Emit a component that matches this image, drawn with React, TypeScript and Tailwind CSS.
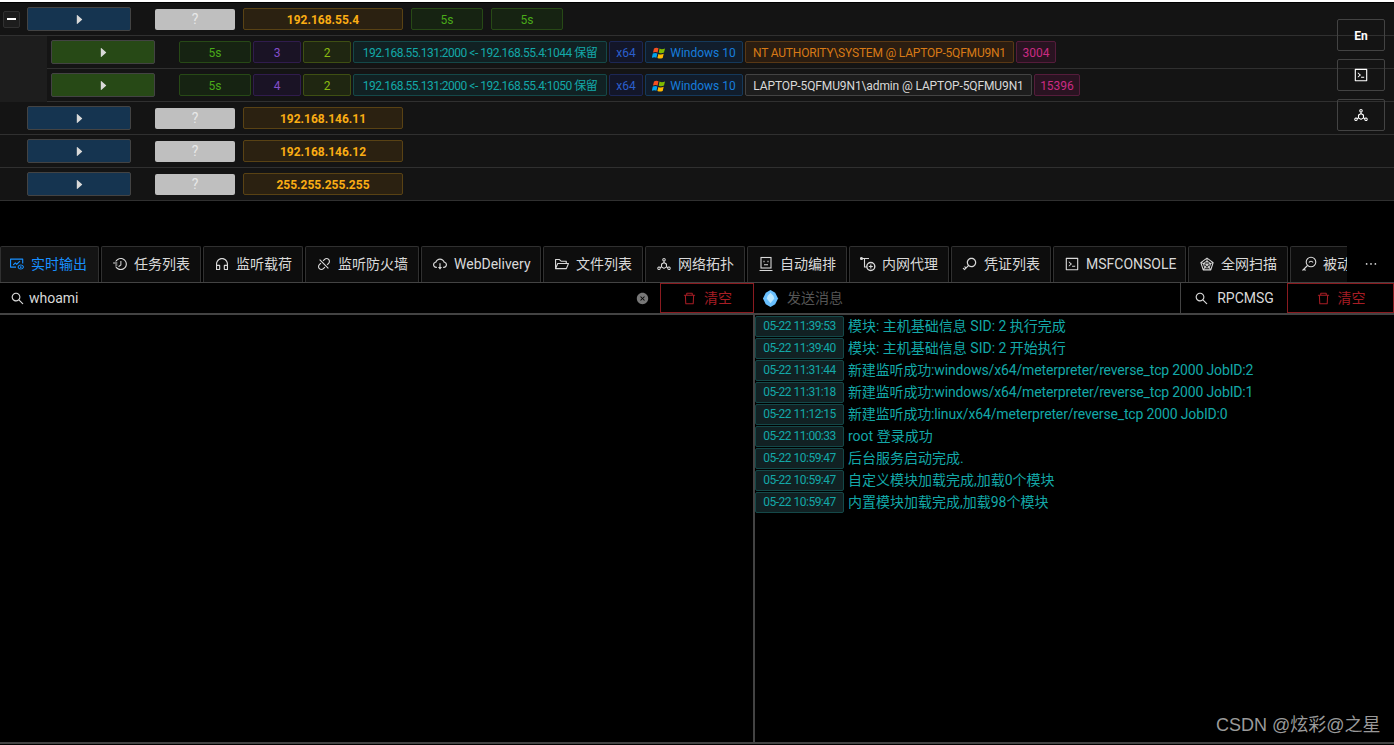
import type { ReactNode } from "react";
import {
  AiFillCaretRight,
  AiFillCloseCircle,
  AiOutlineCloudDownload,
  AiOutlineCode,
  AiOutlineCustomerService,
  AiOutlineDelete,
  AiOutlineDeploymentUnit,
  AiOutlineDisconnect,
  AiOutlineEllipsis,
  AiOutlineFieldTime,
  AiOutlineFolderOpen,
  AiOutlineFundView,
  AiOutlineKey,
  AiOutlineRadarChart,
  AiOutlineSearch,
} from "react-icons/ai";

const font = "font-['Roboto','Noto_Sans_CJK_SC',sans-serif]";

function Tag({ className, children }: { className: string; children: ReactNode }) {
  return (
    <span className={`flex h-[22px] items-center justify-center whitespace-nowrap rounded-[2px] border pt-px text-xs ${className}`}>
      {children}
    </span>
  );
}

function WinLogo() {
  return (
    <svg viewBox="0 0 14 14" className="mr-1 h-[14px] w-[14px]">
      <path d="M2 2.500c1.500-1 3-1 4.500-.2L5.600 6.500C4.200 5.800 2.600 5.800 1 6.600z" fill="#f25022" />
      <path d="M7.500 2.600c1.700.8 3.300.8 5.500-.2l-1 4.200c-1.800.9-3.500.9-5.300.2z" fill="#7fba00" />
      <path d="M.8 7.600c1.600-.8 3.100-.8 4.600-.1l-1 4.300c-1.500-.7-3-.7-4.600.1z" fill="#00a4ef" />
      <path d="M6.400 7.900c1.800.7 3.400.7 5.300-.2l-1 4.200c-1.800.9-3.500.9-5.300.2z" fill="#ffb900" />
    </svg>
  );
}

function FaceIcon() {
  return (
    <svg viewBox="0 0 16 16" className="h-4 w-4" fill="none" stroke="currentColor" strokeWidth="1.100">
      <rect x="3" y="1.500" width="10" height="10.500" />
      <path d="M1.500 14.500h13M6 8.800h4" />
      <path d="M5.500 5.500h1M9.500 5.500h1" strokeWidth="1.500" />
    </svg>
  );
}

function ProxyIcon() {
  return (
    <svg viewBox="0 0 16 16" className="h-4 w-4" fill="none" stroke="currentColor" strokeWidth="1.100">
      <path d="M1 2.500h8M4.500 2.500v8.500h2" />
      <circle cx="1.500" cy="2.500" r="1" fill="currentColor" />
      <circle cx="10.800" cy="10.500" r="4" strokeWidth="1.400" />
      <path d="M10.800 8.500v4M8.800 10.500h4" />
    </svg>
  );
}

function PassiveIcon() {
  return (
    <svg viewBox="0 0 16 16" className="h-4 w-4" fill="none" stroke="currentColor" strokeWidth="1.100">
      <circle cx="10" cy="6" r="4.800" />
      <path d="M6.500 9.500L1.500 14.500M3 13l1.500 1.500" />
      <path d="M8 6.500a2.200 2.200 0 0 1 4 0" />
    </svg>
  );
}

function HostRow({ ip, open }: { ip: string; open?: boolean }) {
  return (
    <div className="flex h-[33px] items-center border-b border-[#303030] bg-[#141414] pl-[3px]">
      <div className="w-[24px]">
        {open && (
          <span className="flex h-[17px] w-[17px] items-center justify-center rounded-[2px] border border-[#303030] bg-[#1d1d1d]">
            <span className="h-[2px] w-[9px] bg-white" />
          </span>
        )}
      </div>
      <span className="flex h-6 w-[104px] items-center justify-center rounded-[2px] border border-[#434343] bg-[#153450] text-[#d9d9d9]">
        <AiFillCaretRight className="text-[13px]" />
      </span>
      <span className="ml-6 flex h-[21px] w-[80px] items-center justify-center rounded-[2px] bg-[#bfbfbf] text-sm text-[#e8e8e8]">?</span>
      <Tag className="ml-2 w-[160px] border-[#594214] bg-[#2b2111] font-bold text-[#faad14]">{ip}</Tag>
      {open && (
        <>
          <Tag className="ml-2 w-[72px] border-[#274916] bg-[#162312] text-[#49aa19]">5s</Tag>
          <Tag className="ml-2 w-[72px] border-[#274916] bg-[#162312] text-[#49aa19]">5s</Tag>
        </>
      )}
    </div>
  );
}

function SessionRow({ sid, port, user, system, pid }: { sid: string; port: string; user: string; system?: boolean; pid: string }) {
  return (
    <div className="flex h-[33px] items-center border-b border-[#303030] bg-[#141414] pl-1">
      <span className="flex h-6 w-[104px] items-center justify-center rounded-[2px] border border-[#434343] bg-[#274916] text-[#d9d9d9]">
        <AiFillCaretRight className="text-[13px]" />
      </span>
      <Tag className="ml-6 w-[72px] border-[#274916] bg-[#162312] text-[#49aa19]">5s</Tag>
      <Tag className="ml-0.5 w-[48px] border-[#301c4d] bg-[#1a1325] text-[#854eca]">{sid}</Tag>
      <Tag className="ml-0.5 w-[48px] border-[#3e4f13] bg-[#1f2611] text-[#8bbb11]">2</Tag>
      <Tag className="ml-0.5 w-[254px] border-[#144848] bg-[#112123] tracking-[-0.5px] text-[#13a8a8]">192.168.55.131:2000 &lt;- 192.168.55.4:{port} 保留</Tag>
      <Tag className="ml-0.5 w-[34px] border-[#1c2755] bg-[#131629] text-[#2b5fcc]">x64</Tag>
      <Tag className="ml-0.5 w-[98px] border-[#15395b] bg-[#111d2c] text-[#177ddc]">
        <WinLogo />
        Windows 10
      </Tag>
      {system ? (
        <Tag className="ml-0.5 w-[269px] border-[#593815] bg-[#2b1d11] tracking-[-0.2px] text-[#d87a16]">{user}</Tag>
      ) : (
        <Tag className="ml-0.5 w-[287px] border-[#434343] bg-[#1d1d1d] tracking-[-0.12px] text-[#d9d9d9]">{user}</Tag>
      )}
      <Tag className={`ml-0.5 border-[#551c3b] bg-[#291321] text-[#cb2b83] ${system ? "w-[40px]" : "w-[46px]"}`}>{pid}</Tag>
    </div>
  );
}

const tabs: { label: string; icon: ReactNode; width: string }[] = [
  { label: "任务列表", icon: <AiOutlineFieldTime className="-scale-x-100" />, width: "w-[100px]" },
  { label: "监听载荷", icon: <AiOutlineCustomerService />, width: "w-[100px]" },
  { label: "监听防火墙", icon: <AiOutlineDisconnect />, width: "w-[114px]" },
  { label: "WebDelivery", icon: <AiOutlineCloudDownload />, width: "w-[120px]" },
  { label: "文件列表", icon: <AiOutlineFolderOpen />, width: "w-[100px]" },
  { label: "网络拓扑", icon: <AiOutlineDeploymentUnit />, width: "w-[100px]" },
  { label: "自动编排", icon: <FaceIcon />, width: "w-[100px]" },
  { label: "内网代理", icon: <ProxyIcon />, width: "w-[100px]" },
  { label: "凭证列表", icon: <AiOutlineKey />, width: "w-[100px]" },
  { label: "MSFCONSOLE", icon: <AiOutlineCode />, width: "w-[133px]" },
  { label: "全网扫描", icon: <AiOutlineRadarChart />, width: "w-[100px]" },
  { label: "被动扫描", icon: <PassiveIcon />, width: "w-[100px]" },
];

const logs = [
  ["05-22 11:39:53", "模块: 主机基础信息 SID: 2 执行完成"],
  ["05-22 11:39:40", "模块: 主机基础信息 SID: 2 开始执行"],
  ["05-22 11:31:44", "新建监听成功:windows/x64/meterpreter/reverse_tcp 2000 JobID:2"],
  ["05-22 11:31:18", "新建监听成功:windows/x64/meterpreter/reverse_tcp 2000 JobID:1"],
  ["05-22 11:12:15", "新建监听成功:linux/x64/meterpreter/reverse_tcp 2000 JobID:0"],
  ["05-22 11:00:33", "root 登录成功"],
  ["05-22 10:59:47", "后台服务启动完成."],
  ["05-22 10:59:47", "自定义模块加载完成,加载0个模块"],
  ["05-22 10:59:47", "内置模块加载完成,加载98个模块"],
];

function ClearButton({ className }: { className: string }) {
  return (
    <button className={`flex h-full items-center justify-center gap-[7px] border border-[#8a1b20] text-sm text-[#a61d24] ${className}`}>
      <AiOutlineDelete className="text-[15px]" />
      清空
    </button>
  );
}

export default function App() {
  return (
    <div className={`relative flex h-[745px] flex-col overflow-hidden bg-black pb-px ${font}`}>
      <div className="h-[3px] border-b border-black bg-white" />

      {/* Host table */}
      <HostRow ip="192.168.55.4" open />
      <div className="flex">
        <div className="w-[47px] bg-[#1d1d1d]" />
        <div className="flex-1">
          <SessionRow sid="3" port="1044" user="NT AUTHORITY\SYSTEM @ LAPTOP-5QFMU9N1" system pid="3004" />
          <SessionRow sid="4" port="1050" user="LAPTOP-5QFMU9N1\admin @ LAPTOP-5QFMU9N1" pid="15396" />
        </div>
      </div>
      <HostRow ip="192.168.146.11" />
      <HostRow ip="192.168.146.12" />
      <HostRow ip="255.255.255.255" />

      {/* Floating tools */}
      <div className="absolute left-[1337px] top-[19px] flex flex-col gap-2 text-white">
        <button className="flex h-8 w-[48px] items-center justify-center rounded-[2px] border border-[#434343] pt-px text-xs font-bold">En</button>
        <button className="flex h-8 w-[48px] items-center justify-center rounded-[2px] border border-[#434343] text-base"><AiOutlineCode /></button>
        <button className="flex h-8 w-[48px] items-center justify-center rounded-[2px] border border-[#434343] text-base"><AiOutlineDeploymentUnit /></button>
      </div>

      {/* Tabs */}
      <div className="mt-[45px] flex h-[37px] shrink-0 items-stretch border-b border-[#434343]">
        <div className="flex w-[1347px] gap-0.5 overflow-hidden">
          <div className="flex w-[99px] shrink-0 items-center gap-[6px] rounded-t-[2px] border border-b-0 border-[#303030] bg-[#141414] pb-px pl-2 text-sm text-[#1890ff]">
            <AiOutlineFundView className="text-base" />
            实时输出
          </div>
          {tabs.map((t) => (
            <div key={t.label} className={`flex shrink-0 items-center gap-[6px] rounded-t-[2px] border border-b-0 border-[#303030] bg-[#0d0d0d] pb-px pl-[10px] text-sm text-[#d9d9d9] ${t.width}`}>
              <span className="text-base">{t.icon}</span>
              <span className="whitespace-nowrap">{t.label}</span>
            </div>
          ))}
        </div>
        <div className="flex flex-1 items-center justify-center text-[#d9d9d9]">
          <AiOutlineEllipsis className="text-base" />
        </div>
      </div>

      {/* Search and message bars */}
      <div className="flex h-[32px] shrink-0 border-b-2 border-[#434343] text-sm text-[#d9d9d9]">
        <div className="flex w-[660px] items-center pl-[10px] pr-[11px]">
          <AiOutlineSearch className="mr-[4px] text-[15px]" />
          <span className="flex-1">whoami</span>
          <AiFillCloseCircle className="text-[13px] text-[#777]" />
        </div>
        <ClearButton className="w-[94px]" />
        <div className="flex w-[426px] items-center pl-2 text-[#555]">
          <svg viewBox="0 0 16 18" className="mr-2 h-[17px] w-[17px]">
            <path d="M8 0l5 3 3 6-3 6-5 3-5-3-3-6 3-6z" fill="#69c0ff" />
            <path d="M8 3l3 3 1 3-4 5-4-5 1-3z" fill="#bae7ff" />
          </svg>
          发送消息
        </div>
        <div className="flex w-[107px] items-center justify-center gap-[8px] border-l border-[#434343]">
          <AiOutlineSearch className="text-[15px]" />
          RPCMSG
        </div>
        <ClearButton className="w-[107px]" />
      </div>

      {/* Output panes */}
      <div className="flex min-h-0 flex-1 border-b-2 border-[#434343]">
        <div className="w-[755px] border-r-2 border-[#434343]" />
        <div className="flex-1">
          {logs.map(([time, msg], i) => (
            <div key={i} className="flex h-[22px] items-center">
              <span className="flex h-[21px] w-[89px] items-center justify-center rounded-[2px] border border-[#144848] bg-[#112123] text-xs tracking-[-0.5px] text-[#13a8a8]">{time}</span>
              <span className={`ml-1 whitespace-nowrap text-sm text-[#13a8a8] ${msg.includes("meterpreter") ? "tracking-[-0.15px]" : ""}`}>{msg}</span>
            </div>
          ))}
        </div>
      </div>

      <span className="absolute left-[1216px] top-[711px] font-['Liberation_Sans','Noto_Sans_CJK_SC',sans-serif] text-lg text-[#9a9a9a]">CSDN @炫彩@之星</span>
    </div>
  );
}
